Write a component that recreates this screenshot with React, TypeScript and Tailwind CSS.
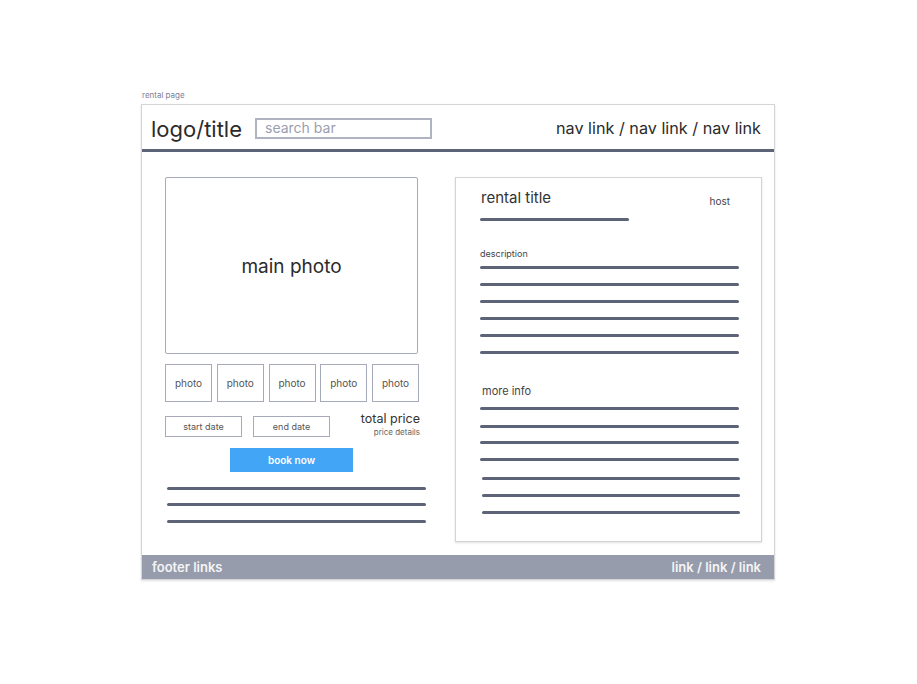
import React from "react";

const Line = ({ w, ml = 0, mt }: { w: string; ml?: number; mt: string }) => (
  <div className={`h-[3px] rounded-full bg-[#5d6477] ${w} ${mt}`} style={ml ? { marginLeft: ml } : undefined} />
);

export default function App() {
  return (
    <div className="w-[917px] h-[684px] bg-white relative" style={{ fontFamily: "Inter, 'Noto Sans', sans-serif" }}>
      <div className="pl-[141px] pt-[90px]">
        <div className="text-[8px] text-[#7b819a] leading-[10px] pl-[1px] h-[14px]">rental page</div>
        <div className="w-[634px] h-[476px] border border-[#d4d4d8] shadow-[0_1px_2px_rgba(0,0,0,0.12)] flex flex-col bg-white">
          {/* header */}
          <div className="h-[47px] border-b-[3px] border-[#5d6477] flex items-center px-[9px] shrink-0">
            <div className="text-[22px] text-[#2b2b2b] leading-none mt-[4px]">logo/title</div>
            <div className="ml-[13px] mt-[2px] w-[177px] h-[21px] border-2 border-[#b0b3c2] flex items-center px-[8px] text-[14px] text-[#9a9eb0] leading-none">
              search bar
            </div>
            <div className="ml-auto text-[16.2px] text-[#2b2b2b] leading-none mt-[2px] pr-[4px]">nav link / nav link / nav link</div>
          </div>
          {/* body */}
          <div className="flex-1 flex pl-[23px] pt-[25px]">
            {/* left column */}
            <div className="w-[262px] flex flex-col">
              <div className="w-[253px] h-[177px] border border-[#a6aabb] rounded-[2px] flex items-center justify-center text-[19px] text-[#2b2b2b]">
                <span className="mt-[3px]">main photo</span>
              </div>
              <div className="w-[254px] mt-[10px] flex justify-between">
                {[0, 1, 2, 3, 4].map((i) => (
                  <div key={i} className="w-[47px] h-[38px] border-[1.5px] border-[#a6aabb] flex items-center justify-center text-[10px] text-[#555]">
                    photo
                  </div>
                ))}
              </div>
              <div className="flex mt-[12px] w-[255px] items-start">
                <div className="mt-[2px] w-[77px] h-[21px] border-[1.5px] border-[#a6aabb] flex items-center justify-center text-[9px] text-[#555]">start date</div>
                <div className="mt-[2px] ml-[11px] w-[77px] h-[21px] border-[1.5px] border-[#a6aabb] flex items-center justify-center text-[9px] text-[#555]">end date</div>
                <div className="ml-auto flex flex-col items-end -mt-[3px]">
                  <div className="text-[12.5px] text-[#333] leading-[16px]">total price</div>
                  <div className="text-[8px] text-[#666] leading-[11px]">price details</div>
                </div>
              </div>
              <div className="w-[253px] flex justify-center mt-[10px]">
                <div className="w-[123px] h-[24px] bg-[#42a5f5] flex items-center justify-center text-[10px] font-semibold text-white">book now</div>
              </div>
              <div className="ml-[2px]">
                <Line w="w-[259px]" mt="mt-[15px]" />
                <Line w="w-[259px]" mt="mt-[13px]" />
                <Line w="w-[259px]" mt="mt-[14px]" />
              </div>
            </div>
            {/* right panel */}
            <div className="ml-[28px] w-[307px] h-[365px] border border-[#d4d4d8] shadow-[0_1px_2px_rgba(0,0,0,0.12)] flex flex-col pl-[24px]">
              <div className="flex items-start mt-[10px]">
                <div className="text-[15px] text-[#333] leading-[20px] ml-[1px]">rental title</div>
                <div className="ml-auto mr-[31px] mt-[6px] text-[10px] text-[#444] leading-[14px]">host</div>
              </div>
              <Line w="w-[149px]" mt="mt-[10px]" />
              <div className="text-[9px] text-[#444] leading-[12px] mt-[27px]">description</div>
              <Line w="w-[259px]" mt="mt-[6px]" />
              <Line w="w-[259px]" mt="mt-[14px]" />
              <Line w="w-[259px]" mt="mt-[14px]" />
              <Line w="w-[259px]" mt="mt-[14px]" />
              <Line w="w-[259px]" mt="mt-[14px]" />
              <Line w="w-[259px]" mt="mt-[14px]" />
              <div className="text-[11px] text-[#444] leading-[14px] mt-[30px] ml-[2px]">more info</div>
              <Line w="w-[259px]" mt="mt-[9px]" />
              <Line w="w-[259px]" mt="mt-[15px]" />
              <Line w="w-[259px]" mt="mt-[13px]" />
              <Line w="w-[259px]" mt="mt-[14px]" />
              <Line w="w-[258px]" ml={2} mt="mt-[16px]" />
              <Line w="w-[258px]" ml={2} mt="mt-[14px]" />
              <Line w="w-[258px]" ml={2} mt="mt-[14px]" />
            </div>
          </div>
          {/* footer */}
          <div className="h-[24px] bg-[#969cab] flex items-center px-[10px] pt-[2px] text-[13px] font-semibold text-[#f4f4f6] shrink-0">
            <span>footer links</span>
            <span className="ml-auto pr-[3px]">link / link / link</span>
          </div>
        </div>
      </div>
    </div>
  );
}
